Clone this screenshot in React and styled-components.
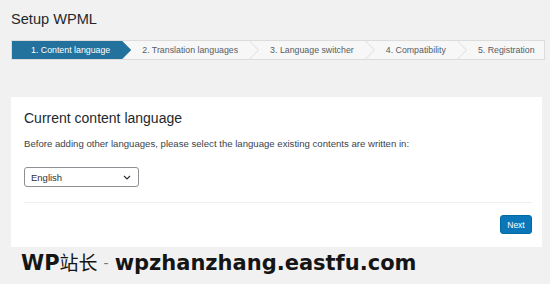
import React from "react";
import styled, { createGlobalStyle } from "styled-components";

const Global = createGlobalStyle`
  html, body { margin: 0; padding: 0; }
  body {
    background: #f1f1f1;
    font-family: "Liberation Sans", Arial, sans-serif;
    color: #23282d;
    width: 550px;
    height: 284px;
    overflow: hidden;
  }
`;

const Page = styled.div`
  padding: 9px 5px 0 11px;
  display: flex;
  flex-direction: column;
`;

const Title = styled.h1`
  margin: 0;
  font-size: 14.6px;
  font-weight: 400;
  line-height: 20px;
  color: #23282d;
`;

const Steps = styled.div`
  margin-top: 11px;
  display: flex;
  height: 18px;
  border: 1px solid #dcdcdc;
  background: #f7f7f7;
  width: 532px;
  box-sizing: content-box;
  overflow: hidden;
`;

const Step = styled.div`
  position: relative;
  display: flex;
  align-items: center;
  flex: ${(p) => (p.$last ? "1 1 auto" : "0 0 auto")};
  padding-left: ${(p) => (p.$first ? 20 : 11)}px;
  padding-right: ${(p) => (p.$last ? 1 : 21)}px;
  font-size: 8.8px;
  white-space: nowrap;
  color: ${(p) => (p.$active ? "#ffffff" : "#555d66")};
  background: ${(p) => (p.$active ? "#22729d" : "transparent")};
  margin: ${(p) => (p.$active ? "-1px 0 -1px -1px" : "0")};
  height: ${(p) => (p.$active ? "20px" : "18px")};
  clip-path: ${(p) =>
    p.$active
      ? "polygon(0 0, calc(100% - 10px) 0, 100% 50%, calc(100% - 10px) 100%, 0 100%)"
      : "none"};
`;

const Chevron = styled.svg`
  position: absolute;
  right: 0;
  top: -1px;
  width: 11px;
  height: 20px;
`;

const Card = styled.section`
  margin-top: 37px;
  width: 531px;
  box-sizing: border-box;
  background: #fff;
  padding: 12px 10px 13px 13px;
  display: flex;
  flex-direction: column;
`;

const Heading = styled.h2`
  margin: 0;
  font-size: 14px;
  font-weight: 400;
  line-height: 18px;
  color: #23282d;
`;

const Text = styled.p`
  margin: 10px 0 0;
  font-size: 9.6px;
  line-height: 13px;
  color: #3c434a;
`;

const Select = styled.div`
  margin-top: 17px;
  width: 115px;
  height: 20px;
  box-sizing: border-box;
  border: 1px solid #8c8f94;
  border-radius: 3px;
  display: flex;
  align-items: center;
  justify-content: space-between;
  padding: 0 7px 0 6px;
  font-size: 9.5px;
  color: #2c3338;
`;

const Divider = styled.hr`
  margin: 15px 0 0;
  border: 0;
  border-top: 1px solid #eeeeee;
  width: 508px;
`;

const Footer = styled.div`
  display: flex;
  justify-content: flex-end;
  margin-top: 12px;
`;

const Button = styled.button`
  width: 32px;
  height: 19px;
  padding: 0;
  border: 1px solid #006ba1;
  border-radius: 3px;
  background: #0b77b9;
  color: #fff;
  font-family: "Liberation Sans", Arial, sans-serif;
  font-size: 8.5px;
`;

const Watermark = styled.div`
  margin: 2px 0 0 10px;
  font-family: "DejaVu Sans", Verdana, sans-serif;
  font-weight: 700;
  font-size: 21px;
  line-height: 26px;
  color: #151515;
  white-space: nowrap;
`;

const Cjk = styled.span`
  font-family: "Noto Sans CJK SC", sans-serif;
  font-weight: 400;
  font-size: 19px;
`;

const Dash = styled.span`
  font-weight: 400;
  color: #777;
  margin: 0 6px;
  font-size: 14px;
  vertical-align: 2px;
`;

const steps = [
  "1. Content language",
  "2. Translation languages",
  "3. Language switcher",
  "4. Compatibility",
  "5. Registration",
];

export default function App() {
  return (
    <>
      <Global />
      <Page>
        <Title>Setup WPML</Title>
        <Steps>
          {steps.map((s, i) => (
            <Step
              key={s}
              $first={i === 0}
              $last={i === steps.length - 1}
              $active={i === 0}
            >
              {s}
              {i > 0 && i < steps.length - 1 && (
                <Chevron viewBox="0 0 11 20">
                  <polyline
                    points="0.5,0 10.5,10 0.5,20"
                    fill="none"
                    stroke="#dcdcdc"
                    strokeWidth="1"
                  />
                </Chevron>
              )}
            </Step>
          ))}
        </Steps>
        <Card>
          <Heading>Current content language</Heading>
          <Text>
            Before adding other languages, please select the language existing
            contents are written in:
          </Text>
          <Select>
            <span>English</span>
            <svg width="8" height="5" viewBox="0 0 8 5">
              <polyline
                points="1,1 4,4 7,1"
                fill="none"
                stroke="#2c3338"
                strokeWidth="1.2"
              />
            </svg>
          </Select>
          <Divider />
          <Footer>
            <Button>Next</Button>
          </Footer>
        </Card>
        <Watermark>
          WP<Cjk>站长</Cjk>
          <Dash>-</Dash>wpzhanzhang.eastfu.com
        </Watermark>
      </Page>
    </>
  );
}
